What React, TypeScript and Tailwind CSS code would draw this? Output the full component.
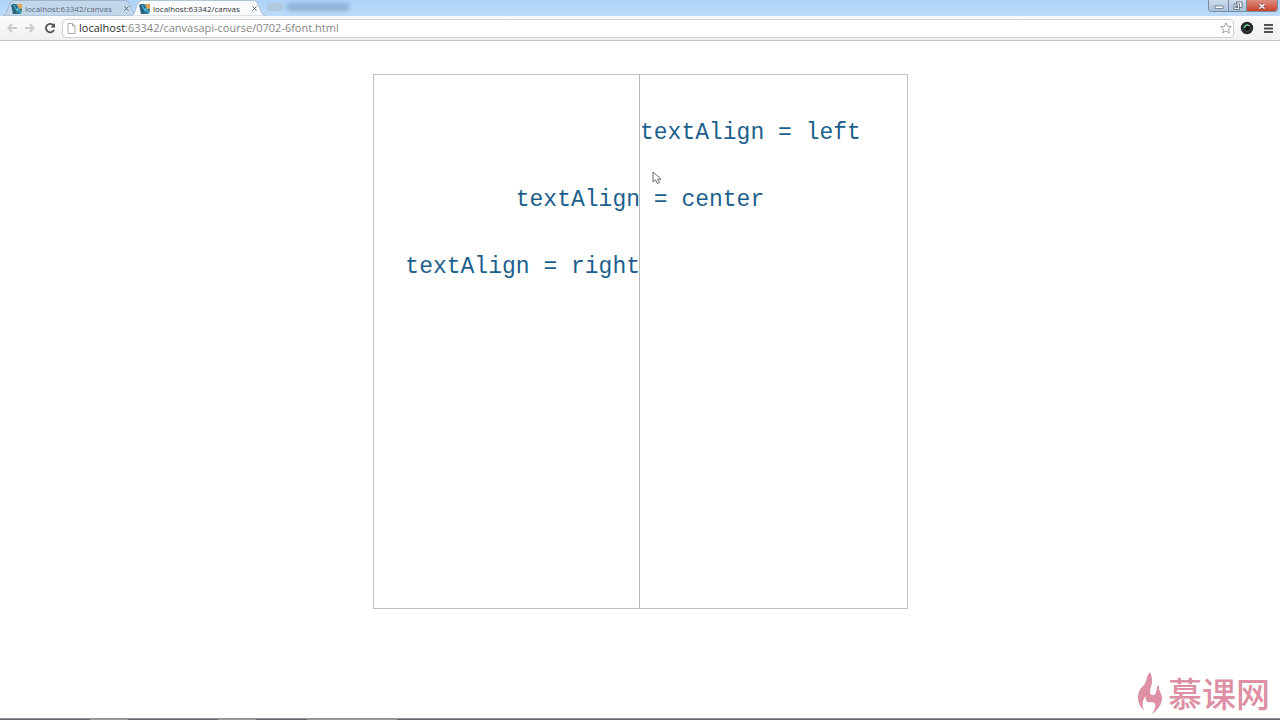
import React from "react";

function Favicon() {
  return (
    <svg viewBox="0 0 12 12" className="h-3 w-3 shrink-0" aria-hidden="true">
      <path d="M1 1l5 0 5 5-3 5H3z" fill="#3a93b5" />
      <path d="M0 2l4-1 3 4-2 6H2z" fill="#2b6482" />
      <path d="M6 1l5 0v9L8 6z" fill="#e3a456" />
      <path d="M5 5l6 1-1 5-5 0z" fill="#2d7898" />
      <path d="M3 2l3 6 1-3 3 6" fill="none" stroke="#55c3d8" strokeWidth="1" />
    </svg>
  );
}

function Tab({ active = false }: { active?: boolean }) {
  return (
    <div className="relative h-4 w-32 shrink-0">
      <svg viewBox="0 0 136 16" preserveAspectRatio="none" className="absolute inset-y-0 left-0 h-4 w-[136px]" aria-hidden="true">
        <path
          d="M0 16C4 15 4 10 7 3Q8 .5 11 .5H122Q125 .5 126 3C130 11 130 15 135 16Z"
          fill={active ? "#fafbfc" : "#c3d7eb"}
          stroke={active ? "#aabacb" : "#96abc0"}
          strokeWidth="0.8"
        />
      </svg>
      <div className="relative flex h-4 items-center gap-0.5 pt-px pl-2">
        <Favicon />
        <a
          href="#canvas"
          className={`w-[93px] overflow-hidden whitespace-nowrap text-[8px] leading-4 ${active ? "text-[#303236]" : "text-[#5d6a78]"}`}
        >
          localhost:63342/canvas
        </a>
        <button type="button" aria-label="Close tab" className="ml-0.5 flex h-3 w-2 items-center justify-center text-[#5d6570]">
          <svg viewBox="0 0 6 6" className="h-[5px] w-[5px]" stroke="currentColor" strokeWidth="1.2">
            <path d="M.5.5l5 5M5.500.5l-5 5" />
          </svg>
        </button>
      </div>
    </div>
  );
}

function WindowControls() {
  return (
    <div className="mr-0.5 flex h-3 overflow-hidden rounded-b-sm border border-t-0 border-[#788ca3]">
      <button type="button" aria-label="Minimize" className="flex w-5 items-center justify-center border-r border-[#788ca3] bg-linear-to-b from-[#cddcec] to-[#a9c1d9]">
        <svg viewBox="0 0 10 8" className="h-2 w-2.5" aria-hidden="true">
          <rect x="1" y="4" width="8" height="2.500" fill="#fff" stroke="#526378" strokeWidth=".7" />
        </svg>
      </button>
      <button type="button" aria-label="Restore" className="flex w-[18px] items-center justify-center border-r border-[#788ca3] bg-linear-to-b from-[#cddcec] to-[#a9c1d9]">
        <svg viewBox="0 0 10 10" className="h-2.5 w-2.5" fill="#fff" stroke="#526378" strokeWidth=".8" aria-hidden="true">
          <rect x="3.500" y="1" width="5.500" height="5.500" />
          <rect x="1" y="3" width="5.500" height="5.500" />
          <rect x="2.800" y="4.800" width="2" height="2" fill="#91a9c0" />
        </svg>
      </button>
      <button type="button" aria-label="Close" className="flex w-[30px] items-center justify-center bg-linear-to-b from-[#dc8d80] to-[#c8402c]">
        <svg viewBox="0 0 8 8" className="h-2 w-2" aria-hidden="true">
          <path d="M1.500 2l5 4.500M6.500 2l-5 4.500" stroke="#6e3b3b" strokeWidth="2.600" />
          <path d="M1.500 2l5 4.500M6.500 2l-5 4.500" stroke="#fff" strokeWidth="1.600" />
        </svg>
      </button>
    </div>
  );
}

function TabStrip() {
  return (
    <div className="flex h-4 items-start bg-linear-to-b from-[#aed4fa] to-[#bcdaf8] pl-[3px]">
      <nav aria-label="Tabs" className="flex">
        <Tab />
        <Tab active />
      </nav>
      <div className="ml-2 flex items-center gap-1 pt-[3px]" aria-hidden="true">
        <span className="h-2 w-4 rounded-sm bg-[#b1c9df]" />
        <span className="h-2 w-[62px] bg-[#7da3ca] opacity-70 blur-[2px]" />
      </div>
      <div className="grow" />
      <WindowControls />
    </div>
  );
}

function Toolbar() {
  return (
    <div className="flex h-[25px] items-center border-b border-[#c5c5c5] bg-linear-to-b from-[#fafbfc] to-[#f0f0f0] pr-1 pl-1">
      <button type="button" aria-label="Back" className="flex h-5 w-4 items-center justify-center text-[#cbcbcb]">
        <svg viewBox="0 0 10 10" className="h-2.5 w-2.5" fill="none" stroke="currentColor" strokeWidth="2">
          <path d="M5 1L1.500 5 5 9M2 5h8" />
        </svg>
      </button>
      <button type="button" aria-label="Forward" className="ml-0.5 flex h-5 w-4 items-center justify-center text-[#cbcbcb]">
        <svg viewBox="0 0 10 10" className="h-2.5 w-2.5" fill="none" stroke="currentColor" strokeWidth="2">
          <path d="M5 1l3.500 4L5 9M8 5H0" />
        </svg>
      </button>
      <button type="button" aria-label="Reload" className="ml-1 flex h-5 w-4 items-center justify-center text-[#505050]">
        <svg viewBox="0 0 12 12" className="h-3 w-3">
          <path d="M9.500 3.500A4.200 4.200 0 1 0 10 7.800" fill="none" stroke="currentColor" strokeWidth="1.800" />
          <path d="M11 1v4.500H6.500z" fill="currentColor" />
        </svg>
      </button>
      <div className="ml-1 flex h-[19px] grow items-center rounded-sm border border-[#cfcfcf] bg-white pr-px pl-1">
        <svg viewBox="0 0 9 11" className="h-[11px] w-[9px] shrink-0" fill="#fff" stroke="#a2a2a2" strokeWidth=".9" aria-hidden="true">
          <path d="M1 .5h4.500L8 3v7.500H1zM5.500.5V3H8" />
        </svg>
        <a href="#canvas" className="ml-[3px] grow text-[11px] leading-4 text-[#858585]">
          <span className="text-[#303030]">localhost</span>:63342/canvasapi-course/0702-6font.html
        </a>
        <button type="button" aria-label="Bookmark this page" className="flex h-4 w-3 items-center justify-center">
          <svg viewBox="0 0 12 12" className="h-3 w-3" fill="#fff" stroke="#929292" strokeWidth=".9" strokeLinejoin="round">
            <path d="M6 .8l1.500 3.400 3.800.4-2.800 2.500.8 3.800L6 9 2.700 10.900l.8-3.800L.7 4.600l3.800-.4z" />
          </svg>
        </button>
      </div>
      <button type="button" aria-label="Extension" className="ml-1.5 flex h-5 w-3.5 items-center justify-center">
        <svg viewBox="0 0 14 14" className="h-3.5 w-3.5">
          <circle cx="7" cy="7" r="6.200" fill="#25292c" />
          <circle cx="7" cy="7" r="3.500" fill="#111" stroke="#555f62" strokeWidth=".7" />
          <path d="M4.500 7Q5 4 8 4" fill="none" stroke="#60d092" strokeWidth="1.500" />
          <path d="M8 4l1.500 1" stroke="#d5e5dd" strokeWidth="1" />
        </svg>
      </button>
      <button type="button" aria-label="Menu" className="ml-2 flex h-5 w-3.5 items-center justify-center text-[#505050]">
        <svg viewBox="0 0 10 9" className="h-[9px] w-2.5" fill="currentColor">
          <path d="M0 0h9v2H0zM0 3.500h9v2H0zM0 7h9v2H0z" />
        </svg>
      </button>
    </div>
  );
}

function AlignmentDemo() {
  return (
    <section
      id="canvas"
      aria-label="Text alignment"
      className="relative mx-auto mt-[33px] aspect-square w-full max-w-[535px] border border-[#c0c0c0] pt-[25px] font-['Liberation_Mono',monospace] text-[23px] leading-[67px] whitespace-pre text-[#1d5f8c]"
    >
      <div aria-hidden="true" className="absolute inset-y-0 left-1/2 -ml-px w-px bg-[#b8b8b8]" />
      <p className="pl-[50%]">textAlign = left</p>
      <p className="text-center">textAlign = center</p>
      <p className="pr-[50%] text-right">textAlign = right</p>
      <svg viewBox="0 0 10 15" className="absolute top-[96px] left-[278px] h-[15px] w-2.5" aria-hidden="true">
        <path d="M1 1v10l2.500-2.200L5.500 12.500l2-1-1.800-3.300H9z" fill="#fff" stroke="#66696e" strokeWidth="1" />
      </svg>
    </section>
  );
}

function Brand() {
  return (
    <div className="flex items-center gap-1.5 text-[#dd8fa4]">
      <svg viewBox="0 -1 24 42" className="h-[42px] w-6" fill="currentColor" aria-hidden="true">
        <path d="M12 -1C7 5 10 8 5 13C1 17 0 20 0 25C0 30 2 34 6 37C4 32 4 27 8 23C7 28 9 30 13 29C17 29 18 32 17 35Q16 38 14 41C20 37 24 31 24 25C24 20 20 18 21 12C17 14 20 21 16 22C12 23 11 19 13 14C15 8 14 4 12 -1Z" />
      </svg>
      <span className="font-['Noto_Sans_CJK_SC',sans-serif] text-[34px] leading-10 font-medium">慕课网</span>
    </div>
  );
}

export default function App() {
  return (
    <div className="flex min-h-screen flex-col bg-white font-['Open_Sans',sans-serif]">
      <header>
        <TabStrip />
        <Toolbar />
      </header>
      <main className="grow">
        <AlignmentDemo />
      </main>
      <footer>
        <div className="flex justify-end pr-2.5 pb-1">
          <Brand />
        </div>
        <div aria-hidden="true" className="flex h-0.5 border-t border-[#929292] bg-[#666370]">
          <span className="w-[7%]" />
          <span className="w-[3%] bg-[#999]" />
          <span className="w-[7%]" />
          <span className="w-[3%] bg-[#999]" />
          <span className="w-[4%]" />
          <span className="w-[7%] bg-[#999]" />
        </div>
      </footer>
    </div>
  );
}
